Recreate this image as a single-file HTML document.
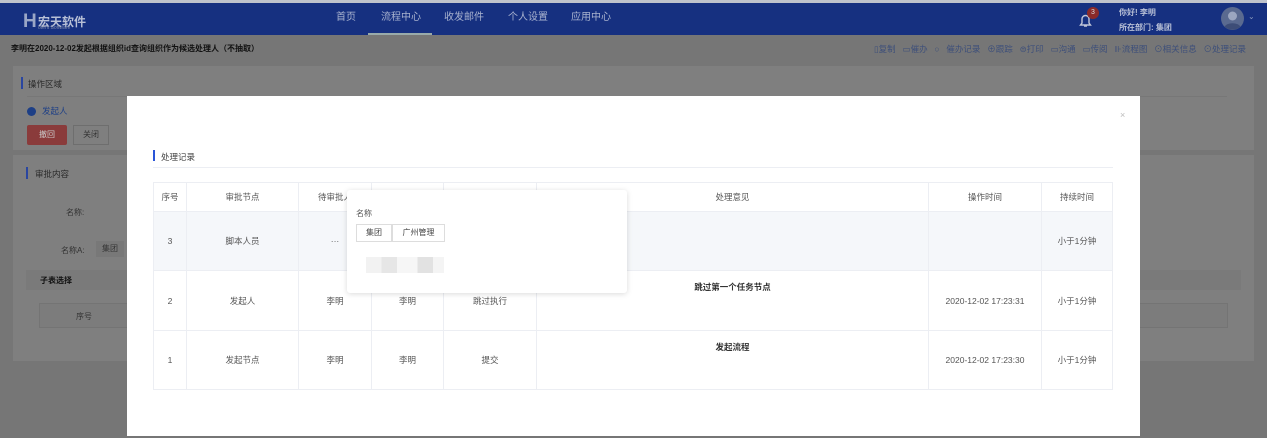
<!DOCTYPE html>
<html><head><meta charset="utf-8"><style>
*{margin:0;padding:0;box-sizing:border-box}
body{width:1267px;height:438px;overflow:hidden;background:#767676;font-family:"Liberation Sans","Noto Sans CJK SC",sans-serif;font-size:9px;color:#333;position:relative}
.a{position:absolute}
.nav{left:0;top:3px;width:1267px;height:32px;background:#163080}
.top{left:0;top:0;width:1267px;height:3px;background:#bfc3cc}
.ni{top:3px;height:32px;line-height:30px;color:#a9b3cf;font-size:10px}
.t{white-space:nowrap}
table{border-collapse:collapse;position:absolute;left:153px;top:182px;width:960px}
td{border:1px solid #eceef3;text-align:center;color:#555;font-size:8.5px}
</style></head><body>
<div class="a top"></div>
<div class="a nav"></div>
<div class="a t" style="left:23px;top:11px;color:#9aa6c6;font-size:19px;font-weight:bold">H</div>
<div class="a t" style="left:38px;top:13px;color:#b8c0d6;font-size:12px;font-weight:bold">宏天软件</div>
<div class="a t" style="left:38px;top:25px;color:#7f8bab;font-size:5px">otent Software</div>
<div class="a ni t" style="left:336px">首页</div>
<div class="a ni t" style="left:381px">流程中心</div>
<div class="a" style="left:368px;top:33px;width:64px;height:2px;background:#9aa"></div>
<div class="a ni t" style="left:444px">收发邮件</div>
<div class="a ni t" style="left:508px">个人设置</div>
<div class="a ni t" style="left:571px">应用中心</div>
<svg class="a" style="left:1079px;top:12px" width="13" height="16" viewBox="0 0 13 16"><path d="M3 11V7a3.5 3.5 0 0 1 7 0v4l1.5 2h-10z M5 14h3" fill="none" stroke="#c0c6d8" stroke-width="1.4"/></svg>
<div class="a" style="left:1087px;top:7px;width:12px;height:12px;border-radius:50%;background:#8a2a2a;color:#ddd;font-size:7px;text-align:center;line-height:12px">3</div>
<div class="a t" style="left:1119px;top:7px;color:#b8c0d6;font-size:8px;font-weight:bold">你好! 李明</div>
<div class="a t" style="left:1119px;top:22px;color:#b8c0d6;font-size:8px;font-weight:bold">所在部门: 集团</div>
<svg class="a" style="left:1221px;top:7px" width="23" height="23" viewBox="0 0 23 23"><circle cx="11.5" cy="11.5" r="11.5" fill="#5a6a90"/><circle cx="11.5" cy="9" r="4.5" fill="#9ba6c0"/><path d="M3.5 19.5a9 6 0 0 1 16 0a11.5 11.5 0 0 1-16 0z" fill="#3d4d77"/></svg>
<div class="a t" style="left:1248px;top:12px;color:#8898bb;font-size:8px">⌄</div>
<div class="a t" style="left:11px;top:43px;color:#111;font-size:8px;font-weight:bold">李明在2020-12-02发起根据组织id查询组织作为候选处理人（不抽取）</div>
<div class="a t" style="left:874px;top:43px;color:#3d4f7a;font-size:8.5px;word-spacing:4.5px">▯复制 ▭催办 ○ 催办记录 ⊕跟踪 ⊜打印 ▭沟通 ▭传阅 ⊪流程图 ⊙相关信息 ⊙处理记录</div>
<div class="a" style="left:13px;top:66px;width:1241px;height:84px;background:#7f7f7f"></div>
<div class="a" style="left:13px;top:155px;width:1241px;height:206px;background:#7f7f7f"></div>
<div class="a" style="left:21px;top:77px;width:2px;height:12px;background:#2a46a0"></div>
<div class="a t" style="left:28px;top:78px;color:#2a2a2a;font-size:8.5px">操作区域</div>
<div class="a" style="left:27px;top:96px;width:1200px;height:1px;background:#777"></div>
<div class="a" style="left:27px;top:107px;width:9px;height:9px;border-radius:50%;background:#1d3f86"></div>
<div class="a t" style="left:42px;top:105px;color:#1d3f86;font-size:8.5px">发起人</div>
<div class="a" style="left:27px;top:125px;width:40px;height:20px;background:#8a3b3b;color:#ccc;font-size:8px;text-align:center;line-height:20px;border-radius:2px">撤回</div>
<div class="a" style="left:73px;top:125px;width:36px;height:20px;background:#7f7f7f;border:1px solid #6e6e6e;color:#333;font-size:8px;text-align:center;line-height:18px">关闭</div>
<div class="a" style="left:26px;top:167px;width:2px;height:12px;background:#2a46a0"></div>
<div class="a t" style="left:35px;top:168px;color:#2a2a2a;font-size:8.5px">审批内容</div>
<div class="a t" style="left:66px;top:207px;color:#333;font-size:8px">名称:</div>
<div class="a t" style="left:61px;top:245px;color:#333;font-size:8px">名称A:</div>
<div class="a" style="left:96px;top:241px;width:28px;height:16px;background:#787878;color:#333;font-size:8px;text-align:center;line-height:16px">集团</div>
<div class="a" style="left:26px;top:270px;width:1215px;height:20px;background:#7a7a7a"></div>
<div class="a t" style="left:40px;top:275px;color:#111;font-size:8px;font-weight:bold">子表选择</div>
<div class="a" style="left:39px;top:303px;width:1189px;height:25px;border:1px solid #747474;background:#7c7c7c"></div>
<div class="a t" style="left:76px;top:311px;color:#333;font-size:8px">序号</div>

<div class="a" style="left:127px;top:96px;width:1013px;height:340px;background:#fff"></div>
<div class="a t" style="left:1120px;top:110px;color:#bbb;font-size:9px">×</div>
<div class="a" style="left:153px;top:150px;width:2px;height:11px;background:#2a55d8"></div>
<div class="a t" style="left:161px;top:151px;color:#444;font-size:8.5px">处理记录</div>
<div class="a" style="left:153px;top:167px;width:960px;height:1px;background:#eceef3"></div>
<table>
<tr style="height:29px"><td style="width:33px">序号</td><td style="width:112px">审批节点</td><td style="width:73px">待审批人</td><td style="width:72px"></td><td style="width:93px"></td><td style="width:392px">处理意见</td><td style="width:113px">操作时间</td><td>持续时间</td></tr>
<tr style="height:59px;background:#f5f7fa"><td>3</td><td>脚本人员</td><td>···</td><td></td><td></td><td></td><td></td><td>小于1分钟</td></tr>
<tr style="height:60px"><td>2</td><td>发起人</td><td>李明</td><td>李明</td><td>跳过执行</td><td style="vertical-align:top;padding-top:10px;color:#333;font-weight:bold">跳过第一个任务节点</td><td>2020-12-02 17:23:31</td><td>小于1分钟</td></tr>
<tr style="height:59px"><td>1</td><td>发起节点</td><td>李明</td><td>李明</td><td>提交</td><td style="vertical-align:top;padding-top:10px;color:#333;font-weight:bold">发起流程</td><td>2020-12-02 17:23:30</td><td>小于1分钟</td></tr>
</table>
<div class="a" style="left:347px;top:190px;width:280px;height:103px;background:#fff;border-radius:3px;box-shadow:0 1px 6px rgba(0,0,0,.15)"></div>
<div class="a t" style="left:356px;top:208px;color:#555;font-size:8px">名称</div>
<div class="a" style="left:356px;top:224px;width:36px;height:18px;border:1px solid #ddd;color:#444;font-size:8px;text-align:center;line-height:16px">集团</div>
<div class="a" style="left:392px;top:224px;width:53px;height:18px;border:1px solid #ddd;color:#444;font-size:8px;text-align:center;line-height:16px">广州管理</div>
<div class="a" style="left:366px;top:257px;width:78px;height:16px;background:linear-gradient(90deg,#f2f2f2 0,#f2f2f2 20%,#e6e6e6 20%,#e6e6e6 40%,#f6f6f6 40%,#f6f6f6 66%,#e2e2e2 66%,#e2e2e2 86%,#f4f4f4 86%)"></div>
</body></html>
